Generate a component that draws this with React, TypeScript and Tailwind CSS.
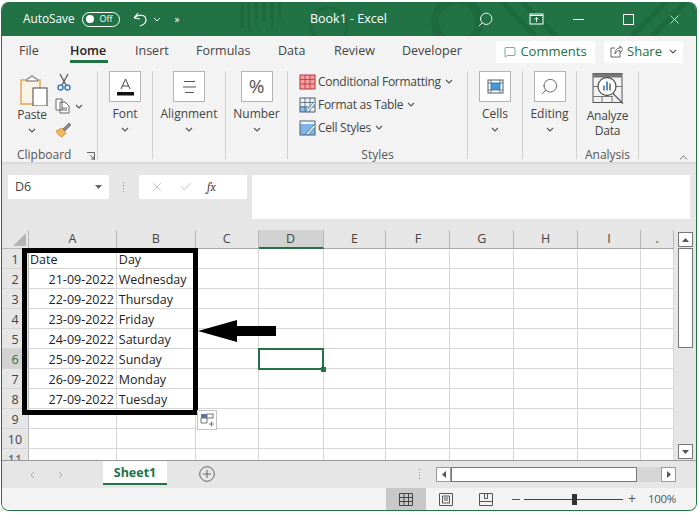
import { ChevronUp, MessageSquare, Search, X, Check } from 'lucide-react';

const rows = [
  ['21-09-2022', 'Wednesday'],
  ['22-09-2022', 'Thursday'],
  ['23-09-2022', 'Friday'],
  ['24-09-2022', 'Saturday'],
  ['25-09-2022', 'Sunday'],
  ['26-09-2022', 'Monday'],
  ['27-09-2022', 'Tuesday'],
];

const columns = ['A', 'B', 'C', 'D', 'E', 'F', 'G', 'H', 'I', '.'];
const columnWidths = [88, 79, 63, 65, 63, 64, 64, 64, 63, 33];

function Chevron({ className = '' }: { className?: string }) {
  return (
    <svg width="8" height="5" viewBox="0 0 8 5" className={className}>
      <path d="M1 1l3 3 3-3" fill="none" stroke="#555" strokeWidth="1.1" />
    </svg>
  );
}

function BoxedGroup({ label, width, children }: { label: string; width: string; children: React.ReactNode }) {
  return (
    <div className={`flex h-[88px] flex-col items-center border-r border-[#d0d0d0] ${width}`}>
      <div className="flex h-[31px] w-[32px] items-center justify-center border border-[#b4b4b4] bg-white">
        {children}
      </div>
      <span className="mt-[4px] leading-[16px]">{label}</span>
      <Chevron className="mt-[5px]" />
    </div>
  );
}

function TableIcon({ kind }: { kind: 'cond' | 'table' | 'cell' }) {
  return (
    <svg width="17" height="16" viewBox="0 0 17 16" className="shrink-0">
      {kind === 'cond' && <rect x="1" y="1" width="15" height="14" fill="#f2a0a0" />}
      {kind === 'table' && <path d="M1 9h7v6H1z" fill="#8ebde8" />}
      {kind === 'cell' && <rect x="1" y="4" width="15" height="11" fill="#7fb5e6" />}
      <rect x="1" y="1" width="15" height="14" fill="none" stroke={kind === 'cond' ? '#b8323c' : '#4a6172'} />
      {kind !== 'cell' && <path d="M1 5.500h15M1 10h15M6 1v14M11 1v14" stroke={kind === 'cond' ? '#b8323c' : '#4a6172'} strokeWidth="0.8" />}
      {kind !== 'cond' && <path d="M7 14l8-9 1.500 1.500L9 15z" fill="#fff" stroke="#3f7fb8" strokeWidth="0.9" />}
    </svg>
  );
}

function TitleBar() {
  return (
    <div className="relative flex h-[34px] shrink-0 items-center overflow-hidden bg-[#217346] text-white">
      <svg width="696" height="34" className="absolute left-0 top-0" viewBox="0 0 696 34">
        <g fill="none" stroke="#1d6a3f" strokeWidth="3">
          <path d="M240 0v26M247 0v30M254 0v24M262 0v20M270 0v26M278 0v16" />
          <circle cx="327" cy="24" r="18" />
          <circle cx="455" cy="20" r="22" strokeWidth="8" />
          <path d="M500 0l34 34M520 0l34 34M630 34l34-34M650 34l34-34" strokeWidth="5" />
        </g>
      </svg>
      <span className="relative ml-[21px] text-[11.8px]">AutoSave</span>
      <div className="relative ml-[7px] flex h-[15px] w-[38px] items-center rounded-full border border-white pl-[3px]">
        <span className="h-[8px] w-[8px] rounded-full bg-white" />
        <span className="ml-[6px] text-[9px]">Off</span>
      </div>
      <svg width="16" height="17" viewBox="0 0 16 17" className="relative ml-[12px]">
        <path d="M2 7l4-5M2 7l6 1M2 7c4-4 12-4 12 2 0 3-3 5-6 6" fill="none" stroke="#fff" strokeWidth="1.200" />
      </svg>
      <svg width="8" height="5" viewBox="0 0 8 5" className="relative ml-[5px]">
        <path d="M1 1l3 3 3-3" fill="none" stroke="#fff" />
      </svg>
      <span className="relative ml-[14px] text-[10px] leading-none">»</span>
      <span className="absolute left-[308px] text-[12.5px]">Book1  -  Excel</span>
      <Search size={17} strokeWidth={1.3} className="absolute left-[475px] -scale-x-100" />
      <svg width="15" height="12" viewBox="0 0 15 12" className="absolute left-[527px]">
        <rect x="1" y="1" width="13" height="10" fill="none" stroke="#fff" />
        <path d="M1 2.500h13M7.500 9V5M5.500 6.500l2-2 2 2" fill="none" stroke="#fff" />
      </svg>
      <span className="absolute left-[571px] h-px w-[11px] bg-white" />
      <span className="absolute left-[621px] h-[11px] w-[11px] border border-white" />
      <X size={15} strokeWidth={1.2} className="absolute left-[665px]" />
    </div>
  );
}

function Tabs() {
  const tabs = [
    ['File', 'w-[51px] ml-[17px]'],
    ['Home', 'w-[65px]'],
    ['Insert', 'w-[61px]'],
    ['Formulas', 'w-[82px]'],
    ['Data', 'w-[56px]'],
    ['Review', 'w-[68px]'],
    ['Developer', 'w-[94px]'],
  ];
  return (
    <div className="flex h-[28px] shrink-0 items-center bg-[#f3f3f3] pt-[3px] text-[12.5px] text-[#444]">
      {tabs.map(([name, width]) => (
        <div key={name} className={`relative flex h-full items-center ${width} ${name === 'Home' ? 'font-semibold text-[#222]' : ''}`}>
          {name}
          {name === 'Home' && <span className="absolute bottom-[1px] left-0 h-[3px] w-[38px] bg-[#217346]" />}
        </div>
      ))}
      <div className="flex h-[22px] w-[99px] items-center justify-center gap-[4px] bg-white text-[13px] text-[#217346]">
        <MessageSquare size={12} strokeWidth={1.2} />
        Comments
      </div>
      <div className="ml-[9px] flex h-[22px] w-[79px] items-center justify-center gap-[4px] bg-white text-[13px] text-[#217346]">
        <svg width="13" height="13" viewBox="0 0 13 13">
          <path d="M5 3H1v9h9V8M5 9c0-4 2-6 5-6V1l3 3.500L10 8V5.500C8 5.500 6 6.500 5 9z" fill="none" stroke="#555" strokeWidth="0.9" />
        </svg>
        Share
        <Chevron className="ml-[3px]" />
      </div>
    </div>
  );
}

function Ribbon() {
  return (
    <div className="relative flex h-[98px] shrink-0 bg-[#f3f3f3] pt-[7px] text-[12px] text-[#444] shadow-[0_2px_2px_#d8d8d8]">
      <div className="relative h-[88px] w-[96px] border-r border-[#d0d0d0]">
        <div className="flex">
          <div className="ml-[14px] mt-[4px] flex w-[32px] flex-col items-center">
            <svg width="28" height="31" viewBox="0 0 28 31" className="self-end">
              <path d="M1 5h19v24H1z" fill="#fbf3e4" stroke="#e0a550" strokeWidth="1.4" />
              <path d="M6 6l2-3h2l1-2 2 0 1 2h2l2 3z" fill="#fff" stroke="#666" />
              <rect x="13" y="13" width="14" height="18" fill="#fff" stroke="#444" />
            </svg>
            <span className="mt-px leading-[16px] tracking-[-0.2px]">Paste</span>
            <Chevron className="mt-[5px]" />
          </div>
          <div className="ml-[7px] mt-[2px] flex flex-col">
            <svg width="14" height="18" viewBox="0 0 14 18" className="ml-[2px]">
              <path d="M3 1l6 11M11 1L5 12" stroke="#555" strokeWidth="1.3" />
              <circle cx="3.500" cy="14.500" r="2.500" fill="none" stroke="#3b7fbd" strokeWidth="1.500" />
              <circle cx="10.500" cy="14.500" r="2.500" fill="none" stroke="#3b7fbd" strokeWidth="1.500" />
            </svg>
            <div className="mt-[7px] flex items-center gap-[5px]">
              <svg width="15" height="16" viewBox="0 0 15 16">
                <path d="M1 1h6v11H1z M5 4h5l4 4v7H5z M7 10h5M7 12h5" fill="#fff" stroke="#555" strokeWidth="0.9" />
              </svg>
              <Chevron />
            </div>
            <svg width="17" height="16" viewBox="0 0 17 16" className="mt-[8px]">
              <path d="M1 9l6-3 4 5-4 4c-2-1-5-3-6-6z" fill="#f0b860" stroke="#c98a2c" strokeWidth="0.8" />
              <path d="M8 7l6-6 2 2-6 6z" fill="#8a8a8a" stroke="#555" strokeWidth="0.6" />
            </svg>
          </div>
        </div>
        <div className="absolute bottom-[-4px] left-[15px] leading-[16px] text-[#555]">Clipboard</div>
        <svg width="8" height="8" viewBox="0 0 8 8" className="absolute bottom-[-1px] left-[85px]">
          <path d="M0 .5h7.500V8M3 3l4 4M7 4v3H4" fill="none" stroke="#666" />
        </svg>
      </div>

      <BoxedGroup label="Font" width="w-[55px]">
        <svg width="17" height="18" viewBox="0 0 17 18">
          <path d="M4 11l4.500-10L13 11M5.500 8h6" fill="none" stroke="#444" />
          <rect x="0" y="14" width="17" height="3.500" fill="#111" />
        </svg>
      </BoxedGroup>
      <BoxedGroup label="Alignment" width="w-[73px]">
        <svg width="15" height="14" viewBox="0 0 15 14">
          <path d="M2 1.500h11M1 7h13M3 12.500h9" stroke="#555" />
        </svg>
      </BoxedGroup>
      <BoxedGroup label="Number" width="w-[62px]">
        <span className="text-[19px] leading-none text-[#555]">%</span>
      </BoxedGroup>

      <div className="relative h-[88px] w-[180px] border-r border-[#d0d0d0] pl-[11px]">
        <div className="-mt-px flex h-[23px] items-center gap-[2px] tracking-[-0.27px]">
          <TableIcon kind="cond" />
          Conditional Formatting
          <Chevron className="ml-[2px]" />
        </div>
        <div className="flex h-[23px] items-center gap-[2px] tracking-[-0.27px]">
          <TableIcon kind="table" />
          Format as Table
          <Chevron className="ml-[2px]" />
        </div>
        <div className="flex h-[23px] items-center gap-[2px] tracking-[-0.27px]">
          <TableIcon kind="cell" />
          Cell Styles
          <Chevron className="ml-[2px]" />
        </div>
        <div className="absolute bottom-[-4px] left-0 w-full text-center leading-[16px] text-[#555]">Styles</div>
      </div>

      <BoxedGroup label="Cells" width="w-[55px]">
        <svg width="17" height="15" viewBox="0 0 17 15">
          <rect x="1" y="1" width="15" height="13" fill="none" stroke="#4a6172" />
          <rect x="4" y="4" width="9" height="7" fill="#3f9be0" />
          <path d="M1 4h15M1 11h15M4 1v13M13 1v13" stroke="#4a6172" strokeWidth="0.8" />
        </svg>
      </BoxedGroup>
      <BoxedGroup label="Editing" width="w-[54px]">
        <Search size={19} strokeWidth={1.1} color="#555" className="-scale-x-100" />
      </BoxedGroup>

      <div className="relative flex h-[88px] w-[62px] flex-col items-center border-r border-[#d0d0d0] pt-px">
        <svg width="32" height="33" viewBox="0 0 32 32">
          <rect x="1" y="1" width="29" height="29" fill="none" stroke="#555" />
          <rect x="1" y="1" width="29" height="4" fill="#777" />
          <path d="M1 14h6M24 14h6M10 24v6M20 24v6M1 24h20" stroke="#777" />
          <circle cx="15" cy="14" r="9" fill="#fff" stroke="#555" strokeWidth="1.300" />
          <path d="M11 13h2v5h-2z" fill="#888" />
          <path d="M14 9h2v9h-2z" fill="#4a90d0" />
          <path d="M17 11h2v7h-2z" fill="#888" />
          <path d="M21 21l10 10" stroke="#666" strokeWidth="1.500" />
        </svg>
        <span className="mt-[3px] text-center leading-[15px] tracking-[-0.2px]">Analyze Data</span>
        <div className="absolute bottom-[-4px] leading-[16px] text-[#555]">Analysis</div>
      </div>
      <ChevronUp size={13} strokeWidth={1.5} color="#555" className="absolute left-[675px] top-[87px]" />
    </div>
  );
}

function FormulaBar() {
  return (
    <div className="flex h-[68px] shrink-0 items-start bg-[#e6e6e6] pl-[6px] pt-[13px] text-[12.5px] text-[#444]">
      <div className="flex h-[24px] w-[101px] items-center justify-between bg-white px-[7px]">
        D6
        <svg width="7" height="4" viewBox="0 0 7 4">
          <path d="M0 0h7L3.500 4z" fill="#666" />
        </svg>
      </div>
      <div className="ml-[14px] mt-[7px] flex flex-col gap-[2px]">
        <span className="h-px w-px bg-[#888]" />
        <span className="h-px w-px bg-[#888]" />
        <span className="h-px w-px bg-[#888]" />
        <span className="h-px w-px bg-[#888]" />
      </div>
      <div className="ml-[15px] flex h-[24px] w-[108px] items-center bg-white pl-[11px]">
        <X size={14} strokeWidth={1.3} color="#b4b4b4" />
        <Check size={14} strokeWidth={1.3} color="#b4b4b4" className="ml-[15px]" />
        <span className="ml-[14px] font-serif text-[12px] italic">fx</span>
      </div>
      <div className="ml-[5px] h-[44px] w-[438px] bg-white" />
    </div>
  );
}

function HeaderCell({ label, width, active }: { label: string; width: number; active: boolean }) {
  return (
    <div
      className={`flex items-center justify-center border-r border-[#b8b8b8] pt-px ${active ? 'border-b-2 border-b-[#217346] bg-[#d2d2d2]' : 'border-b border-b-[#a8a8a8]'}`}
      style={{ width }}
    >
      {label}
    </div>
  );
}

function Sheet() {
  const rowCells = (n: number) => {
    const row = rows[n - 2];
    return columnWidths.map((w, i) => (
      <div
        key={i}
        className={`flex items-center border-r border-[#d6d6d6] pt-[4px] text-[#222] ${i === 0 ? 'pl-px pr-[2px]' : 'px-[2px]'}`}
        style={{ width: w }}
      >
        {n === 1 && i === 0 && 'Date'}
        {n === 1 && i === 1 && 'Day'}
        {row && i === 0 && <span className="w-full text-right">{row[0]}</span>}
        {row && i === 1 && <span className="whitespace-nowrap">{row[1]}</span>}
      </div>
    ));
  };

  return (
    <div className="flex min-h-0 flex-1 bg-white text-[12.5px]">
      <div className="relative flex-1 overflow-hidden">
        <div className="flex h-[19px] bg-[#e6e6e6] text-[#444]">
          <div className="flex w-[27px] items-end justify-end border-b border-r border-[#b8b8b8] p-[2px]">
            <svg width="13" height="13" viewBox="0 0 13 13">
              <path d="M13 0v13H0z" fill="#b4b4b4" />
            </svg>
          </div>
          {columns.map((c, i) => (
            <HeaderCell key={c} label={c} width={columnWidths[i]} active={c === 'D'} />
          ))}
        </div>
        {Array.from({ length: 11 }, (_, idx) => idx + 1).map((n) => (
          <div key={n} className="flex h-[20px] border-b border-[#d6d6d6]">
            <div className={`flex w-[27px] items-center justify-center border-r border-[#b8b8b8] pt-[4px] text-[#444] ${n === 6 ? 'bg-[#d2d2d2] text-[#217346]' : 'bg-[#e6e6e6]'}`}>
              {n}
            </div>
            {rowCells(n)}
          </div>
        ))}

        <div className="absolute left-[20px] top-[18px] h-[167px] w-[176px] border-[5px] border-black" />
        <svg width="80" height="24" viewBox="0 0 80 24" className="absolute left-[195px] top-[89px]">
          <path d="M1 12L40 1v6h39v10H40v6z" fill="#000" />
        </svg>
        <div className="absolute left-[256px] top-[118px] h-[22px] w-[66px] border-2 border-[#217346]" />
        <span className="absolute left-[319px] top-[137px] h-[5px] w-[5px] bg-[#217346]" />
        <div className="absolute left-[195px] top-[180px] flex h-[20px] w-[20px] items-center justify-center border border-[#c4c4c4] bg-white">
          <svg width="15" height="14" viewBox="0 0 15 14">
            <rect x="1" y="1" width="6" height="4" fill="#5b73a8" />
            <rect x="7" y="1" width="6" height="4" fill="none" stroke="#777" />
            <path d="M1 5h6v5H1zM9 11h5M11.500 8.500v5" fill="none" stroke="#777" />
          </svg>
        </div>
      </div>

      <div className="flex w-[22px] shrink-0 flex-col items-center bg-[#e6e6e6] pt-[2px]">
        <div className="flex h-[15px] w-[15px] items-center justify-center border border-[#777] bg-white">
          <svg width="7" height="4" viewBox="0 0 7 4"><path d="M3.500 0L7 4H0z" fill="#555" /></svg>
        </div>
        <div className="mt-px h-[100px] w-[15px] border border-[#777] bg-white" />
        <div className="mb-px mt-auto flex h-[15px] w-[15px] items-center justify-center border border-[#777] bg-white">
          <svg width="7" height="4" viewBox="0 0 7 4"><path d="M0 0h7L3.500 4z" fill="#555" /></svg>
        </div>
      </div>
    </div>
  );
}

function SheetTabs() {
  return (
    <div className="flex h-[28px] shrink-0 items-start border-t border-[#999] bg-[#e6e6e6] text-[#aaa]">
      <svg width="5" height="8" viewBox="0 0 5 8" className="ml-[28px] mt-[10px]"><path d="M4 1L1 4l3 3" fill="none" stroke="#aaa" /></svg>
      <svg width="5" height="8" viewBox="0 0 5 8" className="ml-[23px] mt-[10px]"><path d="M1 1l3 3-3 3" fill="none" stroke="#aaa" /></svg>
      <div className="ml-[40px] flex h-[24px] w-[64px] items-center justify-center border-b-2 border-[#217346] bg-white pt-[2px] text-[12.5px] font-bold text-[#217346]">
        Sheet1
      </div>
      <svg width="16" height="16" viewBox="0 0 16 16" className="ml-[32px] mt-[5px]">
        <circle cx="8" cy="8" r="7.300" fill="none" stroke="#666" />
        <path d="M8 4v8M4 8h8" stroke="#666" />
      </svg>
      <div className="ml-[204px] mt-[8px] flex flex-col gap-[2px]">
        <span className="h-px w-px bg-[#888]" />
        <span className="h-px w-px bg-[#888]" />
        <span className="h-px w-px bg-[#888]" />
        <span className="h-px w-px bg-[#888]" />
      </div>
      <div className="ml-[16px] mt-[6px] flex h-[15px] items-center">
        <div className="flex h-[15px] w-[15px] items-center justify-center border border-[#999] bg-white">
          <svg width="4" height="7" viewBox="0 0 4 7"><path d="M4 0v7L0 3.500z" fill="#555" /></svg>
        </div>
        <div className="h-[15px] w-[186px] border border-[#777] bg-white" />
        <div className="h-[15px] w-[24px] bg-[#d6d6d6]" />
        <div className="flex h-[15px] w-[15px] items-center justify-center border border-[#999] bg-white">
          <svg width="4" height="7" viewBox="0 0 4 7"><path d="M0 0v7l4-3.500z" fill="#555" /></svg>
        </div>
      </div>
    </div>
  );
}

function StatusBar() {
  return (
    <div className="flex h-[22px] shrink-0 items-center bg-[#f3f3f3] text-[11.5px] text-[#555]">
      <div className="ml-[384px] flex h-full w-[40px] items-center justify-center bg-[#c8c8c8]">
        <svg width="14" height="13" viewBox="0 0 14 13">
          <path d="M.5.500h13v12H.5zM.5 4.500h13M.5 8.500h13M5 .500v12M9.500.500v12" fill="none" stroke="#444" />
        </svg>
      </div>
      <svg width="14" height="13" viewBox="0 0 14 13" className="ml-[13px]">
        <path d="M.5.500h13v12H.5zM3.500 3h7v7h-7zM5 5h4M5 7h4" fill="none" stroke="#555" />
      </svg>
      <svg width="14" height="13" viewBox="0 0 14 13" className="ml-[26px]">
        <path d="M.5.500h13v12H.5zM.5 8.500h13M5.500.500v5h3v-5" fill="none" stroke="#555" />
      </svg>
      <span className="ml-[19px] h-px w-[8px] bg-[#555]" />
      <div className="relative ml-[4px] h-px w-[99px] bg-[#444]">
        <span className="absolute left-[48px] top-[-5px] h-[11px] w-[5px] bg-[#333]" />
      </div>
      <span className="ml-[5px] text-[14px] leading-none">+</span>
      <span className="ml-[12px] tracking-[-0.3px]">100%</span>
    </div>
  );
}

export default function App() {
  return (
    <div className="h-[516px] w-[700px] overflow-hidden bg-white pl-px pt-[2px] font-['Open_Sans','Noto_Sans',sans-serif]">
      <div className="flex h-[509px] w-[696px] flex-col overflow-hidden rounded-lg border-x border-b border-[#217346]">
        <TitleBar />
        <Tabs />
        <Ribbon />
        <FormulaBar />
        <Sheet />
        <SheetTabs />
        <StatusBar />
      </div>
    </div>
  );
}
